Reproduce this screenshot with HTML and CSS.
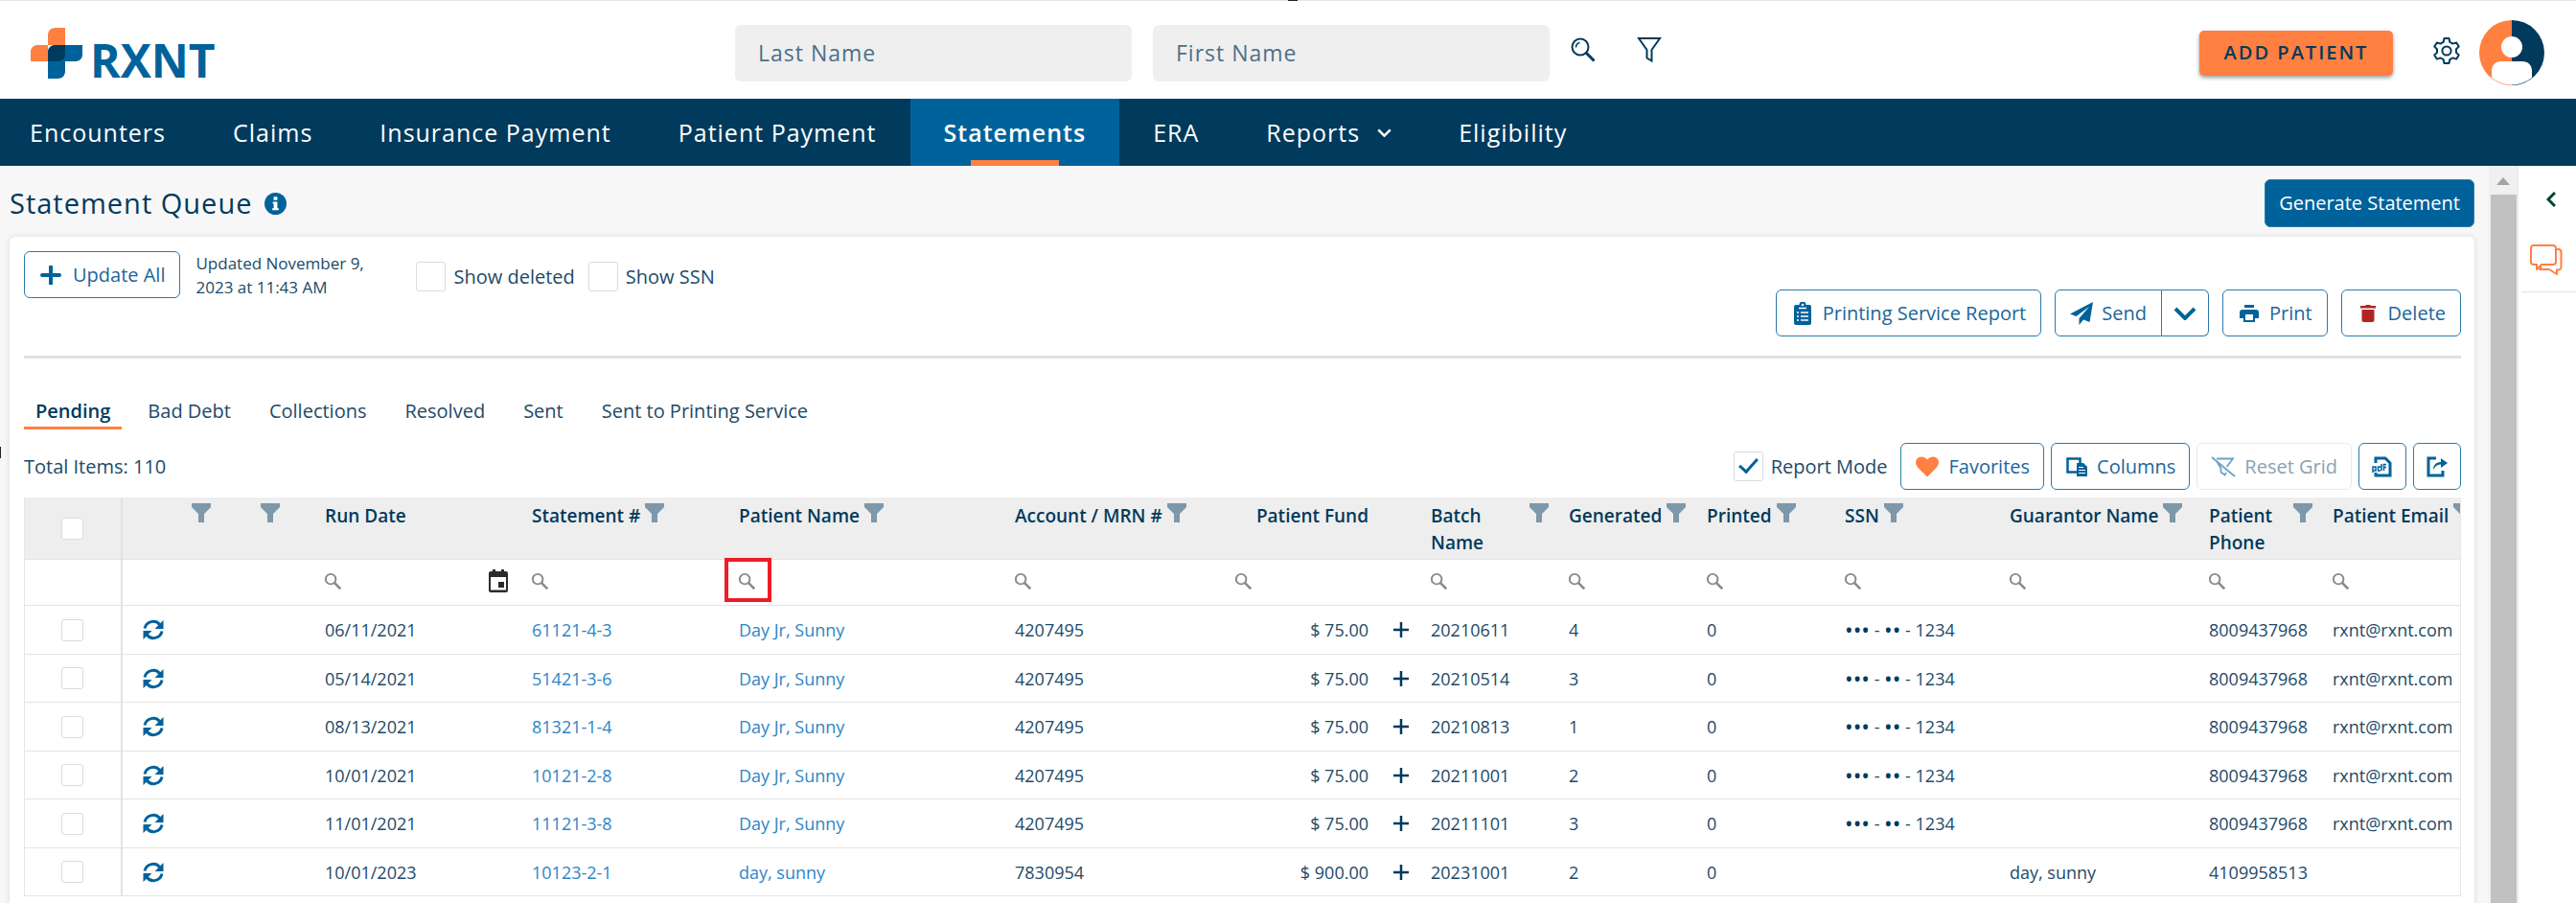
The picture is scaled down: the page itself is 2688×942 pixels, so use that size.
FILE: index.html
```html
<!DOCTYPE html>
<html lang="en">
<head>
    <meta charset="UTF-8">
    <meta name="viewport" content="width=device-width, initial-scale=1.0">
    <title>Statement Queue</title>
    <link rel="stylesheet" href="styles.css">
</head>
<body>
    <!-- Icon sprite -->
    <svg class="sprite" aria-hidden="true">
        <symbol id="i-search" viewBox="0 0 24 24"><circle cx="9.500" cy="9.500" r="7" fill="none" stroke="currentColor" stroke-width="2.600"/><path d="M14.500 14.500L23 23" stroke="currentColor" stroke-width="3.500"/></symbol>
        <symbol id="i-search-lg" viewBox="0 0 26 26"><g fill="none" stroke="currentColor" stroke-width="2"><circle cx="10" cy="10" r="8.500"/><path d="M5.500 10.500a5 5 0 0 1 4-5" stroke-width="1.500"/><path d="M16 16l8.500 8.500" stroke-width="3"/></g></symbol>
        <symbol id="i-funnel-lg" viewBox="0 0 26 28"><path d="M2 2h22l-8.500 12v11.500l-5-3V14z" fill="none" stroke="currentColor" stroke-width="2"/></symbol>
        <symbol id="i-filter" viewBox="0 0 20 20"><path d="M0 0h20v4l-7 7v9H7v-9L0 4z" fill="currentColor"/></symbol>
        <symbol id="i-gear" viewBox="0 0 28 28"><g fill="none" stroke="currentColor" stroke-width="2" stroke-linejoin="round"><path d="M11.500 1h5l.8 3.800 3.200 1.800 3.700-1.200 2.500 4.200L24 12.200v3.600l2.700 2.600-2.500 4.200-3.700-1.200-3.200 1.800-.8 3.800h-5l-.8-3.800-3.200-1.800-3.700 1.200-2.500-4.200L4 15.800v-3.600L1.300 9.600l2.500-4.200 3.700 1.200 3.200-1.800z"/><circle cx="14" cy="14" r="4.600"/></g></symbol>
        <symbol id="i-down" viewBox="0 0 24 14"><path d="M2 2l10 10L22 2" fill="none" stroke="currentColor" stroke-width="4"/></symbol>
        <symbol id="i-left" viewBox="0 0 10 16"><path d="M9 1L2 8l7 7" fill="none" stroke="currentColor" stroke-width="3"/></symbol>
        <symbol id="i-chat" viewBox="0 0 34 32"><g fill="none" stroke="currentColor" stroke-width="2" stroke-linejoin="round"><path d="M4 1h20a3 3 0 0 1 3 3v14a3 3 0 0 1-3 3H12l-5 5v-5H4a3 3 0 0 1-3-3V4a3 3 0 0 1 3-3z"/><path d="M27 5h2.500a3 3 0 0 1 3 3v15.500a3 3 0 0 1-3 3H28V31l-8-5h-10l2-3"/></g></symbol>
        <symbol id="i-info" viewBox="0 0 24 24"><circle cx="12" cy="12" r="12" fill="currentColor"/><path d="M9 10h5v7h1.500v2h-7v-2H10v-5H9zM10 4.500h4V8h-4z" fill="#fff"/></symbol>
        <symbol id="i-plus" viewBox="0 0 20 20"><path d="M10 1v18M1 10h18" stroke="currentColor" stroke-width="4" stroke-linecap="round"/></symbol>
        <symbol id="i-plus-thin" viewBox="0 0 18 18"><path d="M9 1v16M1 9h16" stroke="currentColor" stroke-width="2.500"/></symbol>
        <symbol id="i-clipboard" viewBox="0 0 24 24"><path d="M5 3h3.500a3.500 3.500 0 0 1 7 0H19a2 2 0 0 1 2 2v17a2 2 0 0 1-2 2H5a2 2 0 0 1-2-2V5a2 2 0 0 1 2-2z" fill="currentColor"/><circle cx="12" cy="3" r="1.300" fill="#fff"/><path d="M6 11h2m2 0h8M6 15h2m2 0h8M6 19h2m2 0h8M8 6.500h8" stroke="#fff" stroke-width="1.500"/></symbol>
        <symbol id="i-send" viewBox="0 0 24 24"><path d="M24 0l-3.500 21-6.500-2.500L9.500 24v-7L20 5 6.500 15 0 12.500z" fill="currentColor"/></symbol>
        <symbol id="i-print" viewBox="0 0 24 24"><path d="M7 3h10v3H7zM5 8h14a3 3 0 0 1 3 3v6h-4v4H6v-4H2v-6a3 3 0 0 1 3-3zm3 5v6h8v-6z" fill="currentColor" fill-rule="evenodd"/></symbol>
        <symbol id="i-trash" viewBox="0 0 24 24"><path d="M4 4h5l1-1h4l1 1h5v2.500H4zM5.500 8h13v11a2 2 0 0 1-2 2h-9a2 2 0 0 1-2-2z" fill="currentColor"/></symbol>
        <symbol id="i-heart" viewBox="0 0 24 22"><path d="M12 21.500L2.500 12C-1 8-.5 3.500 2.500 1.500c3-2 7-1 9.500 2 2.500-3 6.500-4 9.500-2s3.500 6.500 0 10.500z" fill="currentColor"/></symbol>
        <symbol id="i-columns" viewBox="0 0 24 24"><path d="M12 17.500H2.500v-14h13V8" fill="none" stroke="currentColor" stroke-width="2.500"/><path d="M12 8h7l4 4v10H12z" fill="currentColor"/><path d="M14 12.500h5m-5 3h7m-7 3h7" stroke="#fff" stroke-width="1.200"/></symbol>
        <symbol id="i-nofilter" viewBox="0 0 26 22"><path d="M1 1l24 20M6 2.500h17L16.500 11M6 5l4.500 7.500v4l4 3 1.500-2.500" fill="none" stroke="currentColor" stroke-width="1.800"/></symbol>
        <symbol id="i-doc" viewBox="0 0 22 22"><path d="M4 7V2h10l5 5v13H4v-3" fill="none" stroke="currentColor" stroke-width="3"/><path d="M1 17v-6h3v4H1M9 15H6.500v-4H10m0 4V8M12.500 15V8.500H15M12.500 11.500H15" fill="none" stroke="currentColor" stroke-width="1.500"/></symbol>
        <symbol id="i-export" viewBox="0 0 22 22"><path d="M10 2H2v18h15v-5" fill="none" stroke="currentColor" stroke-width="3"/><path d="M7 14c0-5 3-8 8-8V2l7 5-7 5V8.500c-4 0-6 2-8 5.500z" fill="currentColor"/></symbol>
        <symbol id="i-calendar" viewBox="0 0 22 24"><path d="M3 2h2V0h3v2h6V0h3v2h2a2 2 0 0 1 2 2v18a2 2 0 0 1-2 2H3a2 2 0 0 1-2-2V4a2 2 0 0 1 2-2zm0 6v13.500h16V8zm8 5h6v6h-6z" fill="currentColor" fill-rule="evenodd"/></symbol>
        <symbol id="i-sync" viewBox="0 0 22 22"><g fill="none" stroke="currentColor" stroke-width="3"><path d="M2 9.500A9 9 0 0 1 18 6M20 12.500A9 9 0 0 1 4 16"/></g><path d="M21.500 1v9h-9zM.5 21v-9h9z" fill="currentColor"/></symbol>
    </svg>

    <header class="topbar">
        <a class="logo" href="#">
            <svg class="logo-mark" viewBox="0 0 54 53" aria-hidden="true">
                <path d="M26 0h10v18H18v17H0V25c0-4 3-7 7-7h11V8c0-5 3-8 8-8z" fill="#ff8040"/>
                <path d="M26 18h28v10c0 4-3 7-7 7H36v10c0 5-3 8-8 8H18V26c0-5 3-8 8-8z" fill="#00629b"/>
                <path d="M26 18h10v9c0 5-3 8-8 8H18v-9c0-5 3-8 8-8z" fill="#003a5c"/>
            </svg>
            <span class="logo-text">RXNT</span>
        </a>
        <form class="patient-search">
            <input type="text" placeholder="Last Name" aria-label="Last Name">
            <input type="text" placeholder="First Name" aria-label="First Name">
            <button type="button" class="icon-btn" aria-label="Search"><svg width="26" height="26"><use href="#i-search-lg"/></svg></button>
            <button type="button" class="icon-btn filter-btn" aria-label="Filter"><svg width="26" height="28"><use href="#i-funnel-lg"/></svg></button>
        </form>
        <div class="user-area">
            <button type="button" class="add-patient">ADD PATIENT</button>
            <button type="button" class="icon-btn settings" aria-label="Settings"><svg width="28" height="28"><use href="#i-gear"/></svg></button>
            <a class="avatar" href="#" aria-label="Profile">
                <svg width="68" height="68" viewBox="0 0 68 68">
                    <path d="M34 0a34 34 0 0 0 0 68z" fill="#ff8040"/>
                    <path d="M34 0a34 34 0 0 1 0 68z" fill="#003a5c"/>
                    <circle cx="34" cy="28" r="11" fill="#fff"/>
                    <path d="M13 60V53c0-6 4-10 10-10h22c6 0 10 4 10 10v7a33 33 0 0 1-42 0z" fill="#fff"/>
                </svg>
            </a>
        </div>
    </header>

    <nav class="main-nav">
        <a href="#">Encounters</a>
        <a href="#">Claims</a>
        <a href="#">Insurance Payment</a>
        <a href="#">Patient Payment</a>
        <a href="#" class="active">Statements</a>
        <a href="#">ERA</a>
        <a href="#">Reports <svg width="15" height="9"><use href="#i-down"/></svg></a>
        <a href="#">Eligibility</a>
    </nav>

    <div class="layout">
        <main class="page">
            <div class="page-head">
                <h1>Statement Queue</h1>
                <svg class="info" width="23" height="23"><use href="#i-info"/></svg>
                <button type="button" class="btn btn-primary">Generate Statement</button>
            </div>

            <section class="card">
                <div class="toolbar">
                    <div class="toolbar-left">
                        <button type="button" class="btn"><svg width="24" height="20"><use href="#i-plus"/></svg>Update All</button>
                        <p class="updated">Updated November 9, 2023 at 11:43 AM</p>
                        <label class="check"><input type="checkbox"> Show deleted</label>
                        <label class="check"><input type="checkbox"> Show SSN</label>
                    </div>
                    <div class="toolbar-right">
                        <button type="button" class="btn"><svg width="24" height="24"><use href="#i-clipboard"/></svg>Printing Service Report</button>
                        <div class="btn-group">
                            <button type="button" class="btn"><svg width="24" height="24"><use href="#i-send"/></svg>Send</button>
                            <button type="button" class="btn btn-icon" aria-label="More send options"><svg width="24" height="14"><use href="#i-down"/></svg></button>
                        </div>
                        <button type="button" class="btn"><svg width="24" height="24"><use href="#i-print"/></svg>Print</button>
                        <button type="button" class="btn"><svg class="red" width="24" height="24"><use href="#i-trash"/></svg>Delete</button>
                    </div>
                </div>

                <div class="tabs">
                    <a href="#" class="active">Pending</a>
                    <a href="#">Bad Debt</a>
                    <a href="#">Collections</a>
                    <a href="#">Resolved</a>
                    <a href="#">Sent</a>
                    <a href="#">Sent to Printing Service</a>
                </div>

                <div class="grid-bar">
                    <span class="total">Total Items: 110</span>
                    <label class="check"><input type="checkbox" checked> Report Mode</label>
                    <button type="button" class="btn"><svg class="orange" width="26" height="22"><use href="#i-heart"/></svg>Favorites</button>
                    <button type="button" class="btn"><svg width="24" height="24"><use href="#i-columns"/></svg>Columns</button>
                    <button type="button" class="btn" disabled><svg width="26" height="22"><use href="#i-nofilter"/></svg>Reset Grid</button>
                    <button type="button" class="btn btn-icon" aria-label="Export to PDF"><svg width="22" height="22"><use href="#i-doc"/></svg></button>
                    <button type="button" class="btn btn-icon" aria-label="Export"><svg width="22" height="22"><use href="#i-export"/></svg></button>
                </div>

                <div class="grid">
                    <table>
                        <colgroup>
                            <col style="width:102px"><col style="width:102px"><col style="width:72px"><col style="width:26px">
                            <col style="width:216px"><col style="width:216px"><col style="width:288px"><col style="width:230px">
                            <col style="width:160px"><col style="width:44px"><col style="width:144px"><col style="width:144px">
                            <col style="width:144px"><col style="width:172px"><col style="width:208px"><col style="width:129px"><col>
                        </colgroup>
                        <thead id="gridHead"></thead>
                        <tbody id="gridBody"></tbody>
                    </table>
                </div>
            </section>
        </main>

        <div class="scrollbar"><span class="arrow-up"></span><span class="thumb"></span></div>

        <aside class="side">
            <button type="button" class="icon-btn collapse" aria-label="Expand panel"><svg width="10" height="16"><use href="#i-left"/></svg></button>
            <button type="button" class="icon-btn chat" aria-label="Messages"><svg width="34" height="32"><use href="#i-chat"/></svg></button>
        </aside>
    </div>

    <script src="script.js"></script>
</body>
</html>
```
FILE: styles.css
```css
/* General Styles */
*,
*::before,
*::after {
    box-sizing: border-box;
}

body {
    position: relative;
    font-family: "Open Sans", "Noto Sans", sans-serif;
    font-size: 20px;
    line-height: 28px;
    color: #1d4a68;
    background: #fff;
    margin: 0;
    height: 100vh;
    display: flex;
    flex-direction: column;
    overflow: hidden;
}

/* Edge handles */
body::before,
body::after {
    content: "";
    position: absolute;
    background: #222;
}

body::before {
    top: 0;
    left: 50%;
    width: 10px;
    height: 1px;
}

body::after {
    top: 50%;
    left: 0;
    width: 1px;
    height: 12px;
    margin-top: -5px;
}

button,
input {
    font: inherit;
    color: inherit;
}

a {
    color: inherit;
    text-decoration: none;
}

svg {
    display: block;
    flex: none;
}

.sprite {
    position: absolute;
    width: 0;
    height: 0;
}

.icon-btn {
    background: none;
    border: 0;
    padding: 0;
    color: #003a5c;
    cursor: pointer;
}

/* Top bar */
.topbar {
    display: flex;
    align-items: center;
    flex: none;
    height: 103px;
    padding: 6px 33px 0 0;
    border-top: 1px solid #e5e5e5;
}

.logo {
    display: flex;
    flex: none;
    width: 767px;
    padding-left: 32px;
    gap: 8px;
}

.logo-mark {
    width: 54px;
    height: 53px;
}

.logo-text {
    font-size: 48px;
    font-weight: 700;
    line-height: 68px;
    height: 53px;
    color: #00629b;
}

.patient-search {
    display: flex;
    align-items: center;
    margin: 0;
}

.patient-search input {
    width: 414px;
    height: 59px;
    margin-right: 22px;
    padding: 0 24px;
    border: 0;
    border-radius: 6px;
    background: #efefef;
    font-size: 23px;
    letter-spacing: 1px;
}

.patient-search input::placeholder {
    color: #4c7089;
    opacity: 1;
}

.patient-search .icon-btn {
    margin-bottom: 7px;
}

.patient-search .filter-btn {
    margin-left: 43px;
}

.user-area {
    display: flex;
    align-items: center;
    margin-left: auto;
}

.add-patient {
    width: 202px;
    height: 47px;
    padding: 0;
    border: 0;
    border-radius: 5px;
    background: #ff8040;
    box-shadow: 0 2px 4px rgba(0, 0, 0, 0.4);
    color: #003a5c;
    font-weight: 600;
    letter-spacing: 2px;
}

.settings {
    margin: 0 20px 4px 42px;
}

/* Navigation */
.main-nav {
    display: flex;
    flex: none;
    height: 70px;
    background: #003a5c;
    color: #fff;
    font-size: 25px;
    letter-spacing: 1px;
}

.main-nav a {
    display: flex;
    align-items: center;
    gap: 18px;
    padding: 0 35px;
    white-space: nowrap;
}

.main-nav a:first-child {
    padding-left: 31px;
}

.main-nav .active {
    background: linear-gradient(#ff8040, #ff8040) bottom center / 92px 6px no-repeat #00629b;
    font-weight: 600;
}

/* Page layout */
.layout {
    display: flex;
    flex: 1;
    min-height: 0;
}

.page {
    flex: 1;
    min-width: 0;
    padding: 14px 15px 0 10px;
    background: #f7f7f7;
    overflow: hidden;
}

.page-head {
    display: flex;
    align-items: center;
    height: 50px;
    margin-bottom: 10px;
}

.page-head h1 {
    margin: 0;
    font-size: 29px;
    font-weight: 500;
    letter-spacing: 1px;
    color: #003a5c;
}

.info {
    margin-left: 13px;
    color: #00629b;
}

/* Buttons */
.btn {
    display: flex;
    align-items: center;
    gap: 9px;
    height: 49px;
    padding: 0 15px;
    border: 1px solid #2b7aab;
    border-radius: 6px;
    background: #fff;
    color: #1b669a;
    white-space: nowrap;
    cursor: pointer;
}

.btn svg {
    color: #00629b;
}

.btn .red {
    color: #b22424;
}

.btn .orange {
    color: #ff8040;
}

.btn:disabled {
    border-color: #e6eaed;
    color: #8ba2b1;
}

.btn:disabled svg {
    color: #6ba3c3;
}

.btn-primary {
    height: 50px;
    margin-left: auto;
    padding: 0 14px;
    background: #00629b;
    color: #fff;
}

.btn-group {
    display: flex;
}

.btn-group .btn:first-child {
    border-radius: 6px 0 0 6px;
}

.btn-group .btn:last-child {
    padding: 0 12px;
    border-left: 0;
    border-radius: 0 6px 6px 0;
}

/* Card */
.card {
    min-height: 720px;
    padding: 15px 14px 0 15px;
    border-radius: 6px;
    background: #fff;
    box-shadow: 0 0 6px rgba(0, 0, 0, 0.12);
}

.toolbar {
    display: flex;
    align-items: flex-end;
    justify-content: space-between;
    height: 112px;
    padding-bottom: 20px;
    border-bottom: 3px solid #e2e2e2;
}

.toolbar-left,
.toolbar-right {
    display: flex;
    gap: 14px;
}

.toolbar-left {
    align-self: flex-start;
}

.toolbar-left .btn {
    gap: 11px;
}

.updated {
    width: 216px;
    margin: 0 0 0 2px;
    font-size: 17px;
    line-height: 25px;
}

.toolbar-left .check {
    margin-top: 11px;
}

/* Checkboxes */
.check {
    display: flex;
    align-items: center;
    gap: 8px;
    height: 31px;
    white-space: nowrap;
}

input[type="checkbox"] {
    appearance: none;
    flex: none;
    display: grid;
    place-items: center;
    width: 31px;
    height: 31px;
    margin: 0;
    border: 1px solid #dcdcdc;
    border-radius: 3px;
    background: #fff;
}

input[type="checkbox"]:checked::after {
    content: "";
    width: 11px;
    height: 19px;
    margin-bottom: 6px;
    border: solid #00629b;
    border-width: 0 3px 3px 0;
    transform: rotate(42deg);
}

/* Tabs */
.tabs {
    display: flex;
    gap: 14px;
    margin-top: 41px;
}

.tabs a {
    padding: 0 13px 2px;
    border-bottom: 3px solid transparent;
    white-space: nowrap;
}

.tabs .active {
    padding: 0 12px 2px;
    border-color: #ff8040;
    color: #003a5c;
    font-weight: 600;
}

/* Grid */
.grid-bar {
    display: flex;
    align-items: center;
    gap: 7px;
    margin: 14px 0 8px;
}

.grid-bar .total {
    margin-right: auto;
}

.grid-bar .check {
    margin-right: 7px;
}

.grid-bar .btn {
    padding: 0 14px;
}

.grid-bar .btn-icon {
    padding: 0 13px;
}

.grid {
    border: solid #e6e6e6;
    border-width: 0 1px;
    overflow: hidden;
}

table {
    width: 100%;
    table-layout: fixed;
    border-collapse: separate;
    border-spacing: 0;
    font-size: 18px;
}

th,
td {
    height: 50px;
    padding: 0 0 0 11px;
    border-bottom: 1px solid #e4e4e4;
    text-align: left;
    white-space: nowrap;
    overflow: hidden;
}

tbody tr:nth-child(odd) td {
    height: 51px;
}

th {
    height: 65px;
    padding-top: 5px;
    background: #eee;
    color: #003a5c;
    font-size: 19px;
    font-weight: 600;
    vertical-align: top;
}

.th-inner {
    display: flex;
    gap: 5px;
}

.th-inner svg {
    margin-top: 1px;
    color: #7c98aa;
}

.th-inner.push {
    justify-content: space-between;
    padding-right: 10px;
}

.th-inner.icon-only {
    justify-content: flex-end;
    padding-right: 10px;
}

th:first-child,
td:first-child {
    padding: 0;
    border-right: 2px solid #e2e2e2;
}

th:first-child {
    vertical-align: middle;
}

.grid input[type="checkbox"] {
    width: 23px;
    height: 23px;
    margin-left: 38px;
}

.filter-row td {
    height: 48px;
    padding-bottom: 3px;
}

.filter {
    position: relative;
    display: flex;
    align-items: center;
    margin-left: -1px;
    color: #8a8a8a;
}

.filter input {
    flex: 1;
    min-width: 0;
    height: 38px;
    padding: 0 6px;
    border: 0;
    background: none;
}

.filter .calendar {
    margin-right: 13px;
    color: #2b2b2b;
}

/* Highlight around the patient name search */
.filter-row .marked {
    overflow: visible;
}

.marked .filter::after {
    content: "";
    position: absolute;
    top: -5px;
    left: -14px;
    width: 49px;
    height: 46px;
    border: 4px solid #ee1c25;
}

td.fund,
th.fund {
    padding-left: 0;
    padding-right: 10px;
    text-align: right;
}

.filter-row td.fund {
    padding-left: 11px;
}

td.add {
    padding-left: 15px;
    color: #003a5c;
}

td.sync {
    padding-left: 21px;
    color: #00629b;
}

.dots {
    font-size: 23px;
    line-height: 20px;
    vertical-align: -2px;
    color: #003a5c;
}

td a {
    color: #2e86c7;
}

/* Scrollbar */
.scrollbar {
    display: flex;
    flex-direction: column;
    align-items: center;
    flex: none;
    width: 30px;
    background: #f0f0f0;
}

.arrow-up {
    margin: 12px 0 10px;
    border: solid transparent;
    border-width: 0 7px 8px;
    border-bottom-color: #a3a3a3;
}

.thumb {
    flex: 1;
    width: 27px;
    background: #c1c1c1;
}

/* Side panel */
.side {
    flex: none;
    width: 61px;
    border-left: 1px solid #e8e8e8;
}

.side .collapse {
    display: block;
    margin: 27px 0 0 29px;
    color: #00432f;
}

.side .chat {
    display: block;
    width: 57px;
    margin: 39px 0 0 3px;
    padding: 0 9px 17px;
    border-bottom: 1px solid #e2e2e2;
    color: #ff8040;
}
```
FILE: script.js
```js
const columns = [
    { title: '', filter: true },
    { title: '', filter: true },
    { title: '' },
    { title: 'Run Date', search: true, calendar: true },
    { title: 'Statement #', filter: true, search: true },
    { title: 'Patient Name', filter: true, search: true, marked: true },
    { title: 'Account / MRN #', filter: true, search: true },
    { title: 'Patient Fund', search: true, cls: 'fund' },
    { title: '' },
    { title: 'Batch<br>Name', label: 'Batch Name', filter: true, search: true, push: true },
    { title: 'Generated', filter: true, search: true },
    { title: 'Printed', filter: true, search: true },
    { title: 'SSN', filter: true, search: true },
    { title: 'Guarantor Name', filter: true, search: true },
    { title: 'Patient<br>Phone', label: 'Patient Phone', filter: true, search: true, push: true },
    { title: 'Patient Email', filter: true, search: true }
];

const ssn = '<span class="dots">•••</span> - <span class="dots">••</span> - 1234';
const rows = [
    ['06/11/2021', '61121-4-3', 'Day Jr, Sunny', '4207495', '$ 75.00', '20210611', '4', '0', ssn, '', '8009437968', 'rxnt@rxnt.com'],
    ['05/14/2021', '51421-3-6', 'Day Jr, Sunny', '4207495', '$ 75.00', '20210514', '3', '0', ssn, '', '8009437968', 'rxnt@rxnt.com'],
    ['08/13/2021', '81321-1-4', 'Day Jr, Sunny', '4207495', '$ 75.00', '20210813', '1', '0', ssn, '', '8009437968', 'rxnt@rxnt.com'],
    ['10/01/2021', '10121-2-8', 'Day Jr, Sunny', '4207495', '$ 75.00', '20211001', '2', '0', ssn, '', '8009437968', 'rxnt@rxnt.com'],
    ['11/01/2021', '11121-3-8', 'Day Jr, Sunny', '4207495', '$ 75.00', '20211101', '3', '0', ssn, '', '8009437968', 'rxnt@rxnt.com'],
    ['10/01/2023', '10123-2-1', 'day, sunny', '7830954', '$ 900.00', '20231001', '2', '0', '', 'day, sunny', '4109958513', '']
];

const icon = (name, w, h, cls = '') => `<svg class="${cls}" width="${w}" height="${h}"><use href="#i-${name}"/></svg>`;

// Header cell
function headCell(col) {
    const funnel = col.filter ? icon('filter', 20, 20) : '';
    let cls = 'th-inner';
    if (col.push) cls += ' push';
    if (!col.title) cls += ' icon-only';
    const inner = col.cls ? col.title : `<div class="${cls}"><span>${col.title}</span>${funnel}</div>`;
    return `<th class="${col.cls || ''}">${inner}</th>`;
}

// Search box under the header
function filterCell(col) {
    if (!col.search) return '<td></td>';
    return `<td class="${col.cls || ''}${col.marked ? 'marked' : ''}"><div class="filter">${icon('search', 18, 18)}
        <input type="text" aria-label="Filter ${col.label || col.title}">${col.calendar ? icon('calendar', 22, 24, 'calendar') : ''}</div></td>`;
}

document.getElementById('gridHead').innerHTML = `
    <tr><th><input type="checkbox" aria-label="Select all"></th>${columns.map(headCell).join('')}</tr>
    <tr class="filter-row"><td></td>${columns.map(filterCell).join('')}</tr>`;

document.getElementById('gridBody').innerHTML = rows.map(r => `
    <tr>
        <td><input type="checkbox" aria-label="Select ${r[1]}"></td>
        <td class="sync">${icon('sync', 22, 22)}</td><td></td><td></td>
        <td>${r[0]}</td>
        <td><a href="#">${r[1]}</a></td>
        <td><a href="#">${r[2]}</a></td>
        <td>${r[3]}</td>
        <td class="fund">${r[4]}</td>
        <td class="add">${icon('plus-thin', 18, 18)}</td>
        ${r.slice(5).map(v => `<td>${v}</td>`).join('')}
    </tr>`).join('');
```
